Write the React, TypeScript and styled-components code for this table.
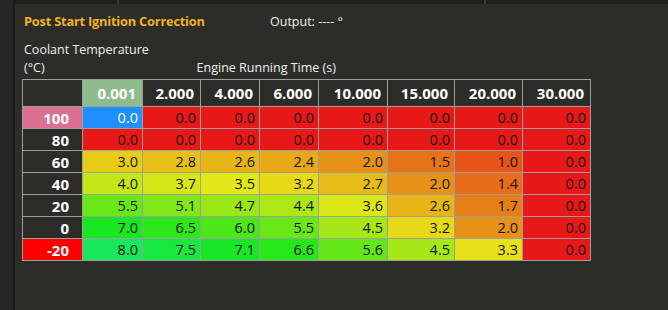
import { createGlobalStyle, styled } from "styled-components";

const GlobalStyle = createGlobalStyle`
  html, body {
    margin: 0;
    background: #2c2c28;
  }
  body {
    font-family: "Open Sans", "Noto Sans", sans-serif;
    color: #ffffff;
  }
`;

/** column headers (engine running time, s) */
const times = ["0.001", "2.000", "4.000", "6.000", "10.000", "15.000", "20.000", "30.000"];
/** row headers (coolant temperature, °C) */
const temps = [100, 80, 60, 40, 20, 0, -20];
/** correction table, one row per temperature */
const values = [
  [0, 0, 0, 0, 0, 0, 0, 0],
  [0, 0, 0, 0, 0, 0, 0, 0],
  [3.0, 2.8, 2.6, 2.4, 2.0, 1.5, 1.0, 0],
  [4.0, 3.7, 3.5, 3.2, 2.7, 2.0, 1.4, 0],
  [5.5, 5.1, 4.7, 4.4, 3.6, 2.6, 1.7, 0],
  [7.0, 6.5, 6.0, 5.5, 4.5, 3.2, 2.0, 0],
  [8.0, 7.5, 7.1, 6.6, 5.6, 4.5, 3.3, 0],
];

// red (0) -> green (8) on the hue wheel
const cellColor = (v: number) => `hsl(${(v / 8) * 140}, 81%, 50%)`;

export default function App() {
  return (
    <Frame>
      <GlobalStyle />
      <SideRail />
      <Main>
        <TopStrip>
          <StripTab $width={102} />
          <StripTab $width={365} />
          <StripTab $width={182} />
        </TopStrip>
        <Panel>
          <TitleRow>
            <Title>Post Start Ignition Correction</Title>
            <Output>Output: ---- °</Output>
          </TitleRow>
          <AxisLabel>Coolant Temperature</AxisLabel>
          <AxisRow>
            <AxisLabel>(°C)</AxisLabel>
            <AxisLabel>Engine Running Time (s)</AxisLabel>
          </AxisRow>
          <Grid>
            <HeadCell />
            {times.map((t, i) => (
              <HeadCell key={t} $active={i === 0}>
                {t}
              </HeadCell>
            ))}
            {temps.map((temp, r) => (
              <Row key={temp}>
                <RowHead $tone={temp === 100 ? "pink" : temp === -20 ? "red" : undefined}>
                  {temp}
                </RowHead>
                {values[r].map((v, c) => {
                  const selected = r === 0 && c === 0;
                  return (
                    <Cell
                      key={c}
                      $selected={selected}
                      style={selected ? undefined : { background: cellColor(v) }}
                    >
                      {v.toFixed(1)}
                    </Cell>
                  );
                })}
              </Row>
            ))}
          </Grid>
        </Panel>
      </Main>
    </Frame>
  );
}

const Frame = styled.div`
  display: flex;
  height: 310px;
  overflow: hidden;
`;

const SideRail = styled.div`
  width: 13px;
  flex-shrink: 0;
  background: #262624;
  border-right: 2px solid #1b1b1a;
`;

const Main = styled.div`
  flex: 1;
  display: flex;
  flex-direction: column;
`;

const TopStrip = styled.div`
  display: flex;
  height: 4px;
  background: #1e1e1d;
`;

const StripTab = styled.div<{ $width: number }>`
  width: ${(p) => p.$width}px;
  border-right: 2px solid #3a3a38;
`;

const Panel = styled.div`
  padding: 8px 0 0 7px;
  display: flex;
  flex-direction: column;
`;

const TitleRow = styled.div`
  display: flex;
  align-items: baseline;
  margin-left: 2px;
  height: 29px;
`;

const Title = styled.div`
  width: 246px;
  font-size: 12.8px;
  font-weight: 700;
  color: #f2b325;
  letter-spacing: -0.2px;
`;

const Output = styled.div`
  font-size: 12.5px;
  color: #f0f0f0;
`;

const AxisRow = styled.div`
  display: flex;
  gap: 150px;
  margin-bottom: 2px;
`;

const AxisLabel = styled.div`
  font-size: 12.5px;
  line-height: 18px;
  color: #f0f0f0;
  margin-left: 2px;
`;

const Grid = styled.div`
  display: grid;
  grid-template-columns: 59px 59px 57px 58px 58px 68px 66px 67px 67px;
  grid-template-rows: 26px repeat(7, 21px);
  gap: 1px;
  padding: 1px;
  width: max-content;
  background: #9e9e9e;
`;

const Row = styled.div`
  display: contents;
`;

const HeadCell = styled.div<{ $active?: boolean }>`
  display: flex;
  align-items: center;
  justify-content: flex-end;
  padding-right: 6px;
  font-size: 15px;
  font-weight: 700;
  color: #ffffff;
  background: ${(p) => (p.$active ? "#8fbc8f" : "#2c2c28")};
`;

const RowHead = styled.div<{ $tone?: "pink" | "red" }>`
  display: flex;
  align-items: center;
  justify-content: flex-end;
  padding-right: 13px;
  font-size: 15px;
  font-weight: 700;
  color: #ffffff;
  background: ${(p) =>
    p.$tone === "pink" ? "#db7093" : p.$tone === "red" ? "#ff0000" : "#2c2c28"};
`;

const Cell = styled.div<{ $selected?: boolean }>`
  display: flex;
  align-items: center;
  justify-content: flex-end;
  padding-right: 4px;
  font-size: 14.5px;
  color: ${(p) => (p.$selected ? "#ffffff" : "#151510")};
  background: ${(p) => (p.$selected ? "#1e90ff" : "transparent")};
`;
